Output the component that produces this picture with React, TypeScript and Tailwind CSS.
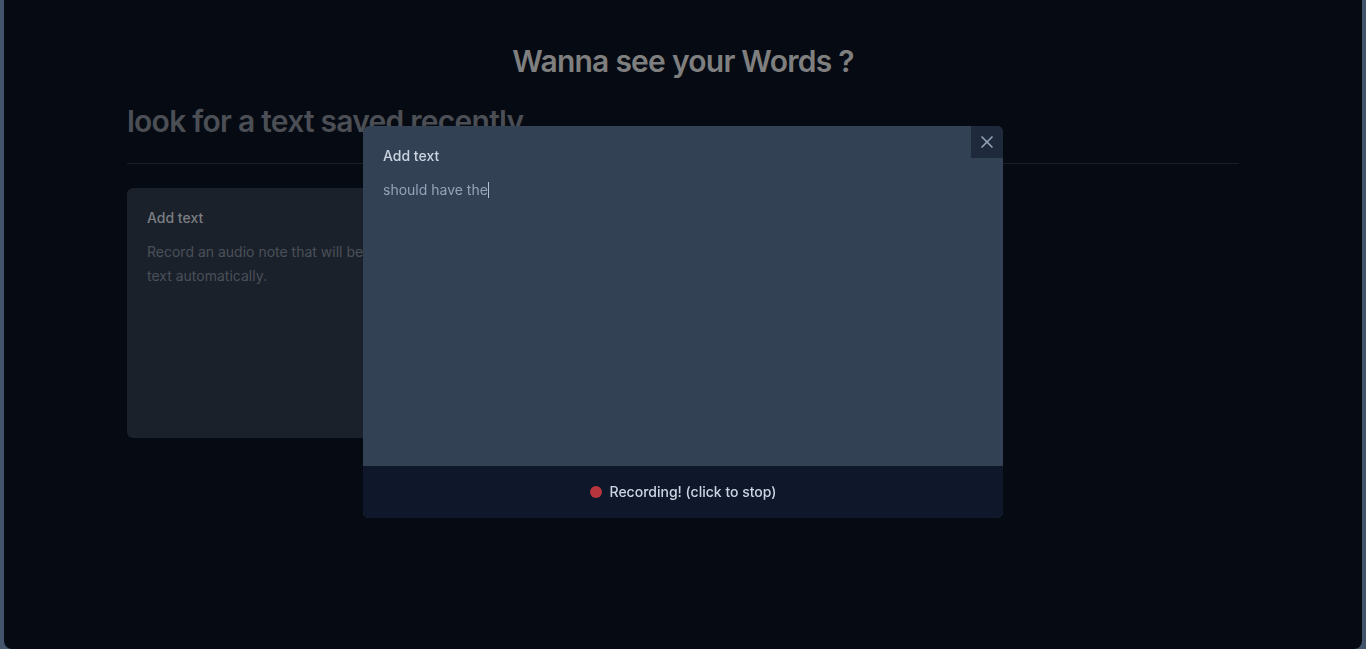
import { X } from "lucide-react";

function NoteCard() {
  return (
    <button
      type="button"
      className="flex flex-col gap-3 rounded-md bg-[#1b212a] p-5 text-left text-sm"
    >
      <span className="font-medium text-[#7a7e83]">Add text</span>
      <span className="leading-6 text-[#4a5059]">
        Record an audio note that will be converted to text automatically.
      </span>
    </button>
  );
}

function NoteDialog() {
  return (
    <div className="fixed inset-0 flex items-center justify-center pb-[5px]">
      <div
        role="dialog"
        aria-modal="true"
        aria-label="Add text"
        className="relative flex h-[392px] w-full max-w-[640px] flex-col overflow-hidden rounded-md bg-[#334155]"
      >
        <button
          type="button"
          aria-label="Close"
          className="absolute top-0 right-0 bg-[#1e293b] p-1.5 text-[#94a3b8]"
        >
          <X className="size-5" />
        </button>
        <form className="flex flex-1 flex-col">
          <div className="flex flex-1 flex-col gap-3 p-5">
            <label htmlFor="note" className="text-sm font-medium text-[#cbd5e1]">
              Add text
            </label>
            <div className="relative flex flex-1">
              <textarea
                id="note"
                defaultValue="should have the"
                className="w-full flex-1 resize-none bg-transparent text-sm leading-6 text-[#94a3b8] caret-transparent outline-none"
              />
              {/* Text cursor after the last dictated word */}
              <span
                aria-hidden="true"
                className="pointer-events-none absolute top-1 left-[105px] h-4 w-px bg-[#b4bfcd]"
              />
            </div>
          </div>
          <button
            type="button"
            className="flex items-center justify-center gap-2 bg-[#0f172a] py-4 text-sm font-medium text-[#cbd5e1]"
          >
            <span className="size-3 rounded-full bg-[#b7363e]" />
            Recording! (click to stop)
          </button>
        </form>
      </div>
    </div>
  );
}

export default function App() {
  return (
    <div className="min-h-screen bg-[#43546b] px-1 font-['Inter',sans-serif]">
      <main className="min-h-screen rounded-b-lg bg-[#050a13]">
        <div className="mx-auto flex max-w-6xl flex-col gap-6 px-5 pt-[43px]">
          <h1 className="text-center text-3xl font-semibold tracking-tight text-[#7f7f7f]">
            Wanna see your Words ?
          </h1>
          <input
            type="text"
            aria-label="Search notes"
            placeholder="look for a text saved recently"
            className="w-full bg-transparent text-3xl font-semibold tracking-tight outline-none placeholder:text-[#4b4e54]"
          />
          <div className="h-px bg-[#1a202b]" />
          <div className="grid auto-rows-[250px] grid-cols-3 gap-6">
            <NoteCard />
          </div>
        </div>
      </main>
      <NoteDialog />
    </div>
  );
}
